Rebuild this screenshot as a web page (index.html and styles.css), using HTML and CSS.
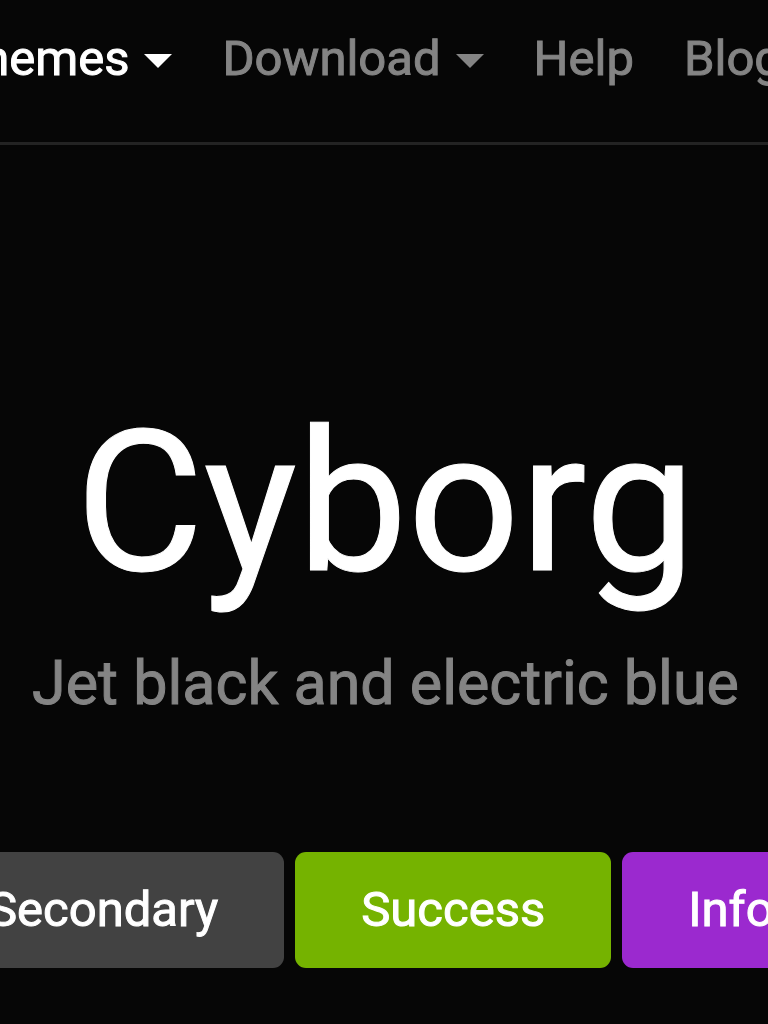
FILE: index.html
```
<!DOCTYPE html>
<html lang="en">
<head>
<meta charset="utf-8">
<title>Cyborg</title>
<link rel="stylesheet" href="styles.css">
</head>
<body>
<header class="navbar">
  <nav class="nav">
    <button class="nav-item active" type="button">Themes<span class="caret"></span></button>
    <button class="nav-item" type="button">Download<span class="caret"></span></button>
    <a class="nav-item" href="#help">Help</a>
    <a class="nav-item" href="#blog">Blog</a>
  </nav>
</header>
<main class="hero">
  <h1 class="title">Cyborg</h1>
  <p class="lead">Jet black and electric blue</p>
  <div class="buttons">
    <button class="btn secondary" type="button">Secondary</button>
    <button class="btn success" type="button">Success</button>
    <button class="btn info" type="button">Info</button>
  </div>
</main>
</body>
</html>
```
FILE: styles.css
```
* { box-sizing: border-box; }
body {
  margin: 0;
  min-height: 100vh;
  overflow-x: hidden;
  background: #060606;
  color: #fff;
  font-family: Roboto, "Liberation Sans", sans-serif;
  -webkit-text-stroke: 1px currentColor;
}
.navbar {
  overflow: hidden;
  border-bottom: 3px solid #232323;
  padding: 29px 0 53px;
}
.nav {
  display: flex;
  gap: 50px;
  margin-left: -47px;
}
.nav-item {
  display: flex;
  flex: none;
  align-items: center;
  gap: 15px;
  padding: 0;
  border: 0;
  background: none;
  color: #848484;
  font-family: inherit;
  font-size: 49px;
  font-weight: 400;
  line-height: 60px;
  text-decoration: none;
}
.nav-item.active { color: #fff; }
.caret {
  margin-top: 3px;
  border: 14px solid transparent;
  border-top-color: currentColor;
  border-bottom: 0;
}
.hero {
  padding: 259px 0 0 3px;
  text-align: center;
  overflow: hidden;
}
.title {
  margin: 0;
  font-size: 197px;
  font-weight: 400;
  line-height: 198px;
}
.lead {
  margin: 43px 0 0;
  color: #848484;
  font-size: 61px;
  font-weight: 400;
  line-height: 76px;
  white-space: nowrap;
}
.buttons {
  display: flex;
  gap: 11px;
  margin: 131px 0 0 -81px;
}
.btn {
  flex: none;
  padding: 28px 66px;
  border: 0;
  border-radius: 11px;
  color: #fff;
  font-family: inherit;
  font-size: 49px;
  font-weight: 400;
  line-height: 60px;
}
.secondary { background: #424242; }
.success { background: #75b300; }
.info { background: #9b29cf; }
```
